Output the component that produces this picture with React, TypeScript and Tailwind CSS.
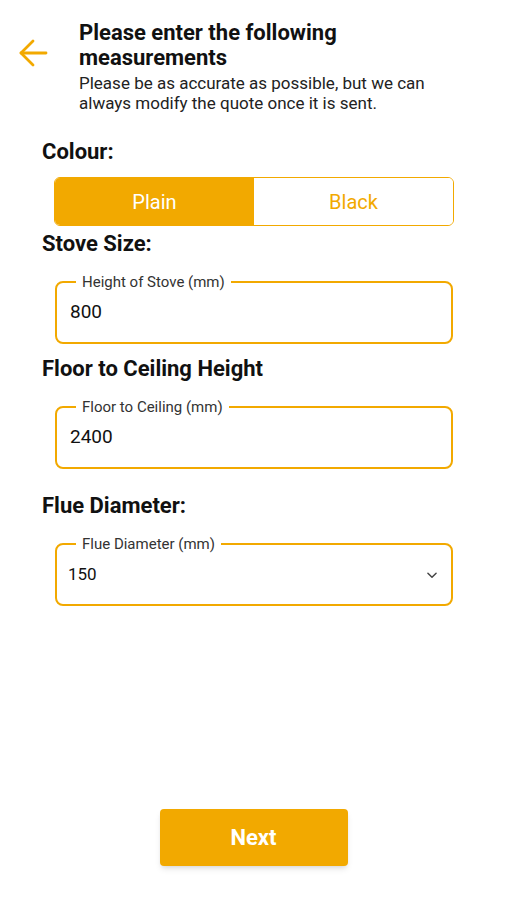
import React from 'react';

const AMBER = '#f2a900';

function Heading({ children, className = '' }: { children: React.ReactNode; className?: string }) {
  return (
    <h2 className={`pl-[42px] text-[22px] leading-[26px] font-bold text-[#111] ${className}`}>
      {children}
    </h2>
  );
}

function OutlinedField({
  label,
  value,
  select,
  className = '',
}: {
  label: string;
  value: string;
  select?: boolean;
  className?: string;
}) {
  return (
    <div
      className={`relative ml-[55px] w-[398px] h-[63px] rounded-lg border-2 border-[#f2a900] flex items-center ${
        select ? 'pl-[11px] pr-[12px]' : 'pl-[13px]'
      } ${className}`}
    >
      <span className="absolute -top-[11px] left-[19px] bg-white px-1.5 text-[15px] leading-[20px] text-[#333]">
        {label}
      </span>
      <span className={`${select ? 'text-[17px]' : 'text-[19px]'} text-[#111] flex-1`}>{value}</span>
      {select && (
        <svg width="14" height="14" viewBox="0 0 24 24" fill="none" stroke="#444" strokeWidth="2.5" strokeLinecap="round" strokeLinejoin="round">
          <path d="m5 9 7 7 7-7" />
        </svg>
      )}
    </div>
  );
}

export default function App() {
  return (
    <div
      className="w-[507px] h-[900px] bg-white flex flex-col"
      style={{ fontFamily: 'Roboto, "Noto Sans", Arial, sans-serif' }}
    >
      {/* header */}
      <div className="flex pl-[18px] pt-[20px]">
        <div className="w-[61px] pt-[19px]">
          <svg width="30" height="28" viewBox="0 0 30 28" fill="none" stroke={AMBER} strokeWidth="2.8" strokeLinecap="round" strokeLinejoin="round">
            <path d="M28 14H3" />
            <path d="M15 2 3 14l12 12" />
          </svg>
        </div>
        <div>
          <h1 className="text-[22px] leading-[25px] font-bold text-[#111]">
            Please enter the following
            <br />
            measurements
          </h1>
          <p className="text-[17px] leading-[20px] text-[#222] mt-[3px]">
            Please be as accurate as possible, but we can
            <br />
            always modify the quote once it is sent.
          </p>
        </div>
      </div>

      <Heading className="mt-[26px]">Colour:</Heading>

      <div className="ml-[54px] w-[400px] h-[49px] mt-[12px] rounded-md border border-[#f2a900] flex overflow-hidden">
        <div className="flex-1 bg-[#f2a900] flex items-center justify-center text-[20px] text-white">
          Plain
        </div>
        <div className="flex-1 bg-white flex items-center justify-center text-[20px] text-[#f2a900]">
          Black
        </div>
      </div>

      <Heading className="mt-[5px]">Stove Size:</Heading>
      <OutlinedField label="Height of Stove (mm)" value="800" className="mt-[24px]" />

      <Heading className="mt-[12px]">Floor to Ceiling Height</Heading>
      <OutlinedField label="Floor to Ceiling (mm)" value="2400" className="mt-[24px]" />

      <Heading className="mt-[24px]">Flue Diameter:</Heading>
      <OutlinedField label="Flue Diameter (mm)" value="150" select className="mt-[24px]" />

      <div className="flex-1" />

      <div className="flex justify-center pb-[34px]">
        <button className="w-[188px] h-[57px] rounded bg-[#f2a900] text-white text-[22px] font-bold shadow-md">
          Next
        </button>
      </div>
    </div>
  );
}
